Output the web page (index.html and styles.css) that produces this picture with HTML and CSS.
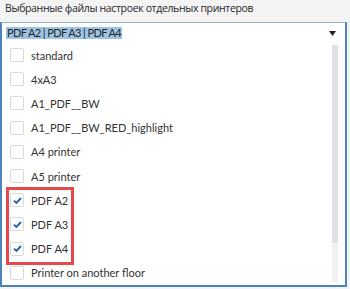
FILE: index.html
```html
<!DOCTYPE html>
<html lang="ru">
<head>
    <meta charset="UTF-8">
    <meta name="viewport" content="width=device-width, initial-scale=1.0">
    <title>Принтеры</title>
    <link rel="stylesheet" href="styles.css">
</head>
<body>
    <div class="field-label">Выбранные файлы настроек отдельных принтеров</div>
    <div class="combo">
        <div class="combo-head">
            <span class="combo-value">PDF A2 | PDF A3 | PDF A4</span>
            <svg class="combo-arrow" width="7" height="5" viewBox="0 0 7 5"><path d="M0 0H7L3.5 5Z" fill="#222"/></svg>
        </div>
        <div class="combo-body">
            <div class="option-list">
                <div class="option"><span class="check"></span>standard</div>
                <div class="option"><span class="check"></span>4xA3</div>
                <div class="option"><span class="check"></span>A1_PDF__BW</div>
                <div class="option"><span class="check"></span>A1_PDF__BW_RED_highlight</div>
                <div class="option"><span class="check"></span>A4 printer</div>
                <div class="option"><span class="check"></span>A5 printer</div>
                <div class="option-group">
                    <div class="option"><span class="check"><svg width="11" height="11" viewBox="0 0 11 11"><path d="M2 5.6L4.4 8L9 3" fill="none" stroke="#1d63b3" stroke-width="1.9"/></svg></span>PDF A2</div>
                    <div class="option"><span class="check"><svg width="11" height="11" viewBox="0 0 11 11"><path d="M2 5.6L4.4 8L9 3" fill="none" stroke="#1d63b3" stroke-width="1.9"/></svg></span>PDF A3</div>
                    <div class="option"><span class="check"><svg width="11" height="11" viewBox="0 0 11 11"><path d="M2 5.6L4.4 8L9 3" fill="none" stroke="#1d63b3" stroke-width="1.9"/></svg></span>PDF A4</div>
                </div>
                <div class="option"><span class="check"></span>Printer on another floor</div>
            </div>
            <div class="scrollbar"><div class="scroll-thumb"></div></div>
        </div>
    </div>
</body>
</html>
```

FILE: styles.css
```css
body {
    margin: 0;
    background-color: #f4f4f5;
    font-family: Lato, 'Open Sans', sans-serif;
    color: #262626;
}
.field-label {
    height: 22px;
    padding-left: 5px;
    font-family: 'Open Sans', sans-serif;
    font-size: 10.5px;
    letter-spacing: -0.35px;
    line-height: 17px;
}
.combo {
    width: 343px;
    height: 262px;
    background-color: #fff;
    border: 2px solid #4d83bb;
    border-top: 1px solid #8fb0d2;
}
.combo-head {
    display: flex;
    align-items: center;
    justify-content: space-between;
    height: 20px;
    padding: 0 9px 0 4px;
}
.combo-value {
    background-color: #9dc3e4;
    font-size: 11px;
    letter-spacing: -0.6px;
    line-height: 12px;
    padding: 0 1px;
}
.combo-body {
    display: flex;
    height: 242px;
}
.option-list {
    flex: 1;
}
.option {
    display: flex;
    align-items: center;
    height: 24.2px;
    padding-left: 8px;
    font-size: 11px;
    color: #333;
}
.check {
    display: flex;
    align-items: center;
    justify-content: center;
    width: 12px;
    height: 12px;
    margin-right: 7px;
    border: 1px solid #d9d9d9;
    border-radius: 2px;
}
.option-group {
    position: relative;
}
.option-group::after {
    content: '';
    position: absolute;
    left: 4px;
    top: -1px;
    width: 62px;
    bottom: -4px;
    border: 3px solid #e8474a;
}
.scrollbar {
    width: 6px;
    margin: 2px 7px 3px 0;
    background-color: #f1f1f4;
}
.scroll-thumb {
    height: 198px;
    background-color: #e1e1e5;
}
```
